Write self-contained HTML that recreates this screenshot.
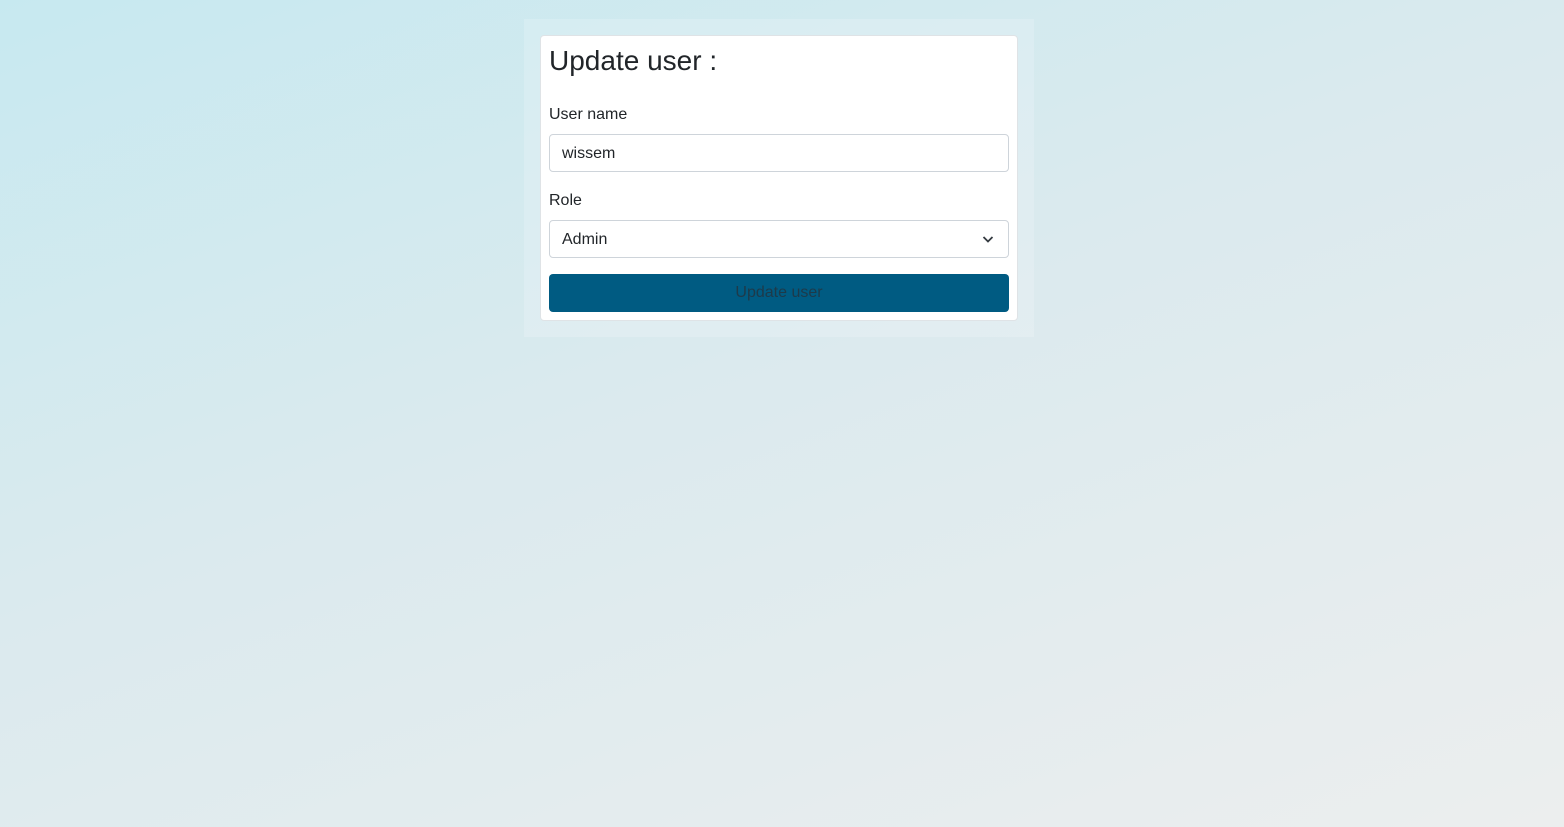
<!DOCTYPE html>
<html><head><style>
html,body{margin:0;height:827px;width:1564px;overflow:hidden}
body{background:linear-gradient(160deg,#c7e9f0 0%,#dbeaee 45%,#eceeee 100%);font-family:"Liberation Sans",Arial,sans-serif;color:#212529;position:relative}
.wrap{position:absolute;left:524px;top:19px;width:510px;height:318px;background:rgba(255,255,255,0.18)}
.card{position:absolute;left:540px;top:35px;width:476px;height:284px;background:#fff;border:1px solid #dfe3e6;border-radius:4px}
h1{position:absolute;left:8px;top:8px;margin:0;font-weight:400;font-size:28px;line-height:34px}
.lbl{position:absolute;left:8px;font-size:16px}
.in{position:absolute;left:8px;width:458px;height:36px;border:1px solid #ced4da;border-radius:4px;box-sizing:content-box;font-size:16px;line-height:37px;padding:0;text-indent:12px}
.btn{position:absolute;left:8px;top:238px;width:460px;height:38px;background:#005b82;border-radius:4px;text-align:center;line-height:38px;font-size:16px;color:#1d3a4a}
</style></head><body>
<div class="wrap"></div>
<div class="card">
<h1>Update user :</h1>
<div class="lbl" style="top:70px">User name</div>
<div class="in" style="top:98px">wissem</div>
<div class="lbl" style="top:156px">Role</div>
<div class="in" style="top:184px">Admin
<svg style="position:absolute;right:14px;top:13px" width="12" height="10" viewBox="0 0 12 10"><path d="M1.5 3 L6 7.5 L10.5 3" fill="none" stroke="#343a40" stroke-width="1.8"/></svg></div>
<div class="btn">Update user</div>
</div>
</body></html>
